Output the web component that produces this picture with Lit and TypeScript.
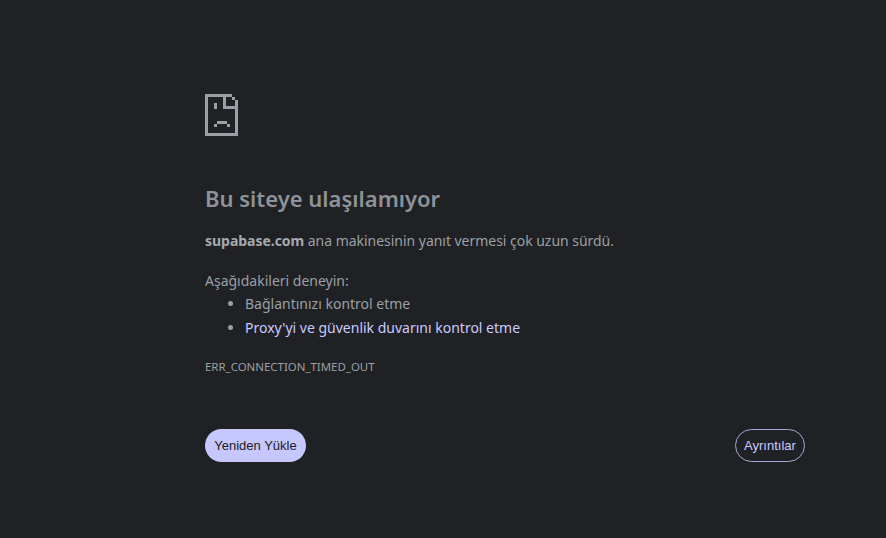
import { LitElement, html, css, svg } from 'lit';
import { customElement } from 'lit/decorators.js';

// sad page icon, drawn on a 3px pixel grid
const ICON_RECTS = [
  [0, 0, 27, 3], [0, 0, 3, 42], [0, 39, 33, 3], [30, 6, 3, 36],
  [18, 0, 3, 15], [18, 12, 15, 3],
  [27, 3, 3, 3],
  [9, 9, 3, 6], [12, 27, 10, 3], [9, 30, 3, 3], [22, 30, 3, 3],
];

@customElement('app-root')
export class AppRoot extends LitElement {
  static styles = css`
    :host {
      display: block;
      height: 538px;
      background: #202124;
      color: #9aa0a6;
      font-family: 'Noto Sans', 'Open Sans', sans-serif;
      font-size: 14px;
      overflow: hidden;
    }
    .wrapper {
      box-sizing: border-box;
      width: 600px;
      margin-left: 205px;
      padding-top: 94px;
      display: flex;
      flex-direction: column;
      height: 100%;
    }
    .icon {
      display: block;
      width: 33px;
      height: 42px;
    }
    h1 {
      margin: 47px 0 0;
      font-size: 22px;
      line-height: 30px;
      font-weight: 600;
      color: #8d9399;
    }
    .summary {
      margin: 16px 0 0;
      line-height: 24px;
      letter-spacing: -0.03px;
    }
    .summary b {
      font-weight: 700;
      color: #a5aaaf;
    }
    .try {
      margin: 16px 0 0;
      line-height: 23px;
    }
    ul {
      margin: 0;
      padding-left: 40px;
      line-height: 24px;
    }
    li::marker {
      color: #9aa0a6;
    }
    .link {
      color: #c9cbff;
    }
    .code {
      margin-top: 19px;
      font-size: 11.45px;
      line-height: 16px;
    }
    .buttons {
      margin-top: 54px;
      display: flex;
      justify-content: space-between;
      align-items: center;
    }
    button {
      box-sizing: border-box;
      height: 33px;
      border-radius: 17px;
      font-family: 'Liberation Sans', sans-serif;
      font-size: 13px;
      padding: 0;
    }
    .reload {
      width: 101px;
      background: #c6c7ff;
      color: #202124;
      border: none;
    }
    .details {
      width: 70px;
      background: transparent;
      color: #c9cbff;
      border: 1px solid #a6a8d8;
    }
  `;

  render() {
    return html`
      <div class="wrapper">
        <svg class="icon" viewBox="0 0 33 42" shape-rendering="crispEdges">
          ${ICON_RECTS.map(
            ([x, y, w, h]) =>
              svg`<rect x=${x} y=${y} width=${w} height=${h} fill="#9aa0a6"></rect>`
          )}
        </svg>
        <h1>Bu siteye ulaşılamıyor</h1>
        <p class="summary"><b>supabase.com</b> ana makinesinin yanıt vermesi çok uzun sürdü.</p>
        <div class="try">Aşağıdakileri deneyin:</div>
        <ul>
          <li>Bağlantınızı kontrol etme</li>
          <li class="link">Proxy'yi ve güvenlik duvarını kontrol etme</li>
        </ul>
        <div class="code">ERR_CONNECTION_TIMED_OUT</div>
        <div class="buttons">
          <button class="reload">Yeniden Yükle</button>
          <button class="details">Ayrıntılar</button>
        </div>
      </div>
    `;
  }
}
